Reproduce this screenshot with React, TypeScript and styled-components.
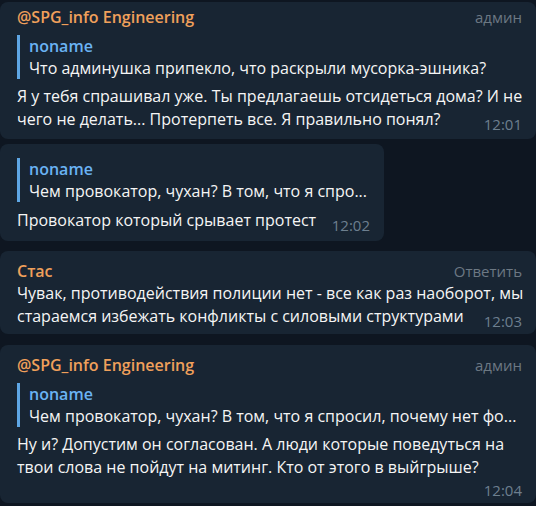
import styled, { createGlobalStyle } from "styled-components";

const GlobalStyle = createGlobalStyle`
  html, body {
    margin: 0;
    padding: 0;
    background: #0e1621;
  }
  body {
    font-family: "Open Sans", "Noto Sans", sans-serif;
  }
`;

const Chat = styled.div`
  width: 536px;
  height: 506px;
  overflow: hidden;
  background: #0e1621;
  display: flex;
  flex-direction: column;
  align-items: flex-start;
`;

const Bubble = styled.div<{ $width?: number; $gap: number; $pt: number; $pb: number }>`
  box-sizing: border-box;
  flex-shrink: 0;
  width: ${p => (p.$width ? `${p.$width}px` : "100%")};
  margin-top: ${p => p.$gap}px;
  padding: ${p => p.$pt}px 14px ${p => p.$pb}px 17px;
  background: #182533;
  border-radius: 8px;
  color: #f5f5f5;
`;

const Header = styled.div`
  display: flex;
  justify-content: space-between;
  align-items: center;
  height: 20px;
`;

const Author = styled.span`
  color: #f0a05b;
  font-weight: 600;
  font-size: 16px;
`;

const Badge = styled.span`
  color: #6c7883;
  font-size: 15px;
`;

const Reply = styled.div<{ $mt: number }>`
  margin-top: ${p => p.$mt}px;
  border-left: 3px solid #5ea6e4;
  padding-left: 9px;
  line-height: 22px;
`;

const ReplyName = styled.div`
  color: #6ab3f3;
  font-weight: 600;
  font-size: 16px;
`;

const ReplyText = styled.div`
  font-size: 16px;
  white-space: nowrap;
  overflow: hidden;
`;

const Body = styled.div<{ $mt: number }>`
  margin-top: ${p => p.$mt}px;
  font-size: 16px;
  line-height: 23px;
  white-space: pre;
`;

const Time = styled.span`
  float: right;
  margin: 5px 0 -5px 10px;
  font-size: 15px;
  line-height: 23px;
  color: #6d7f8f;
`;

const TimeRow = styled.div`
  text-align: right;
  font-size: 15px;
  line-height: 22px;
  color: #6d7f8f;
`;

export default function App() {
  return (
    <>
      <GlobalStyle />
      <Chat>
        <Bubble $gap={2} $pt={5} $pb={8}>
          <Header>
            <Author>@SPG_info Engineering</Author>
            <Badge>админ</Badge>
          </Header>
          <Reply $mt={8}>
            <ReplyName>noname</ReplyName>
            <ReplyText>Что админушка припекло, что раскрыли мусорка-эшника?</ReplyText>
          </Reply>
          <Body $mt={6}>
            {"Я у тебя спрашивал уже. Ты предлагаешь отсидеться дома? И не\nчего не делать... Протерпеть все. Я правильно понял?"}
            <Time>12:01</Time>
          </Body>
        </Bubble>

        <Bubble $width={384} $gap={5} $pt={14} $pb={9}>
          <Reply $mt={0}>
            <ReplyName>noname</ReplyName>
            <ReplyText>Чем провокатор, чухан? В том, что я спро...</ReplyText>
          </Reply>
          <Body $mt={7}>
            Провокатор который срывает протест
            <Time>12:02</Time>
          </Body>
        </Bubble>

        <Bubble $gap={10} $pt={10} $pb={6}>
          <Header>
            <Author>Стас</Author>
            <Badge>Ответить</Badge>
          </Header>
          <Body $mt={1}>
            {"Чувак, противодействия полиции нет - все как раз наоборот, мы\nстараемся избежать конфликты с силовыми структурами"}
            <Time>12:03</Time>
          </Body>
        </Bubble>

        <Bubble $gap={11} $pt={10} $pb={2}>
          <Header>
            <Author>@SPG_info Engineering</Author>
            <Badge>админ</Badge>
          </Header>
          <Reply $mt={8}>
            <ReplyName>noname</ReplyName>
            <ReplyText>Чем провокатор, чухан? В том, что я спросил, почему нет фо...</ReplyText>
          </Reply>
          <Body $mt={6}>
            {"Ну и? Допустим он согласован. А люди которые поведуться на\nтвои слова не пойдут на митинг. Кто от этого в выйгрыше?"}
          </Body>
          <TimeRow>12:04</TimeRow>
        </Bubble>
      </Chat>
    </>
  );
}
